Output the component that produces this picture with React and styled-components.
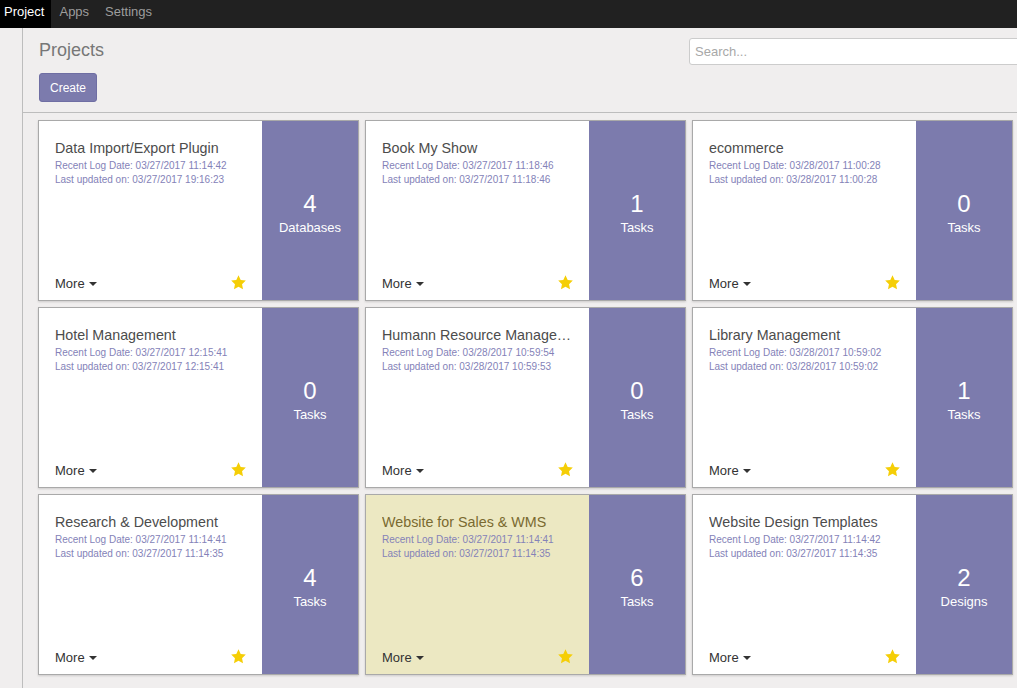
import React from 'react';
import styled, { createGlobalStyle } from 'styled-components';

const projects = [
    { name: 'Data Import/Export Plugin', log: '03/27/2017 11:14:42', updated: '03/27/2017 19:16:23', count: 4, label: 'Databases' },
    { name: 'Book My Show', log: '03/27/2017 11:18:46', updated: '03/27/2017 11:18:46', count: 1, label: 'Tasks' },
    { name: 'ecommerce', log: '03/28/2017 11:00:28', updated: '03/28/2017 11:00:28', count: 0, label: 'Tasks' },
    { name: 'Hotel Management', log: '03/27/2017 12:15:41', updated: '03/27/2017 12:15:41', count: 0, label: 'Tasks' },
    { name: 'Humann Resource Management', log: '03/28/2017 10:59:54', updated: '03/28/2017 10:59:53', count: 0, label: 'Tasks' },
    { name: 'Library Management', log: '03/28/2017 10:59:02', updated: '03/28/2017 10:59:02', count: 1, label: 'Tasks' },
    { name: 'Research & Development', log: '03/27/2017 11:14:41', updated: '03/27/2017 11:14:35', count: 4, label: 'Tasks' },
    { name: 'Website for Sales & WMS', log: '03/27/2017 11:14:41', updated: '03/27/2017 11:14:35', count: 6, label: 'Tasks', highlight: true },
    { name: 'Website Design Templates', log: '03/27/2017 11:14:42', updated: '03/27/2017 11:14:35', count: 2, label: 'Designs' },
];

const App = () => {
    return (
        <>
            <GlobalStyle />
            <TopBar>
                <NavItem active>Project</NavItem>
                <NavItem>Apps</NavItem>
                <NavItem>Settings</NavItem>
            </TopBar>
            <Body>
                <Sidebar />
                <Main>
                    <ControlPanel>
                        <div>
                            <Title>Projects</Title>
                            <CreateButton>Create</CreateButton>
                        </div>
                        <Search placeholder="Search..." />
                    </ControlPanel>
                    <Grid>
                        {projects.map((p) => (
                            <Card key={p.name} highlight={p.highlight}>
                                <Info>
                                    <Name highlight={p.highlight}>{p.name}</Name>
                                    <Meta>Recent Log Date: {p.log}</Meta>
                                    <Meta>Last updated on: {p.updated}</Meta>
                                    <Footer>
                                        <More>More <Caret /></More>
                                        <Star viewBox="0 0 24 24">
                                            <path d="M12 1.8l3.1 6.6 7.2.9-5.3 5 1.4 7.1L12 17.9l-6.4 3.5L7 14.3l-5.3-5 7.2-.9z" />
                                        </Star>
                                    </Footer>
                                </Info>
                                <Counter>
                                    <Count>{p.count}</Count>
                                    <CountLabel>{p.label}</CountLabel>
                                </Counter>
                            </Card>
                        ))}
                    </Grid>
                </Main>
            </Body>
        </>
    );
};
export default App;

const GlobalStyle = createGlobalStyle`
    html, body {
        margin:0;
        padding:0;
        background:#f0eeee;
        overflow:hidden;
        font-family:"Liberation Sans", Arial, sans-serif;
    }
`

const TopBar = styled.div`
    height:28px;
    background:#212121;
    display:flex;
    align-items:stretch;
`

const NavItem = styled.div`
    font-size:13px;
    line-height:16px;
    padding:${p => p.active ? '4px 7px 0 4px' : '4px 8px 0 8px'};
    background:${p => p.active ? '#000' : 'transparent'};
    color:${p => p.active ? '#fff' : '#9d9d9d'};
`

const Body = styled.div`
    display:flex;
    height:660px;
`

const Sidebar = styled.div`
    width:22px;
    flex-shrink:0;
    border-right:1px solid #bdbdbd;
`

const Main = styled.div`
    flex:1;
    min-width:0;
`

const ControlPanel = styled.div`
    display:flex;
    justify-content:space-between;
    align-items:flex-start;
    padding:10px 0 10px 16px;
    border-bottom:1px solid #bdbdbd;
`

const Title = styled.div`
    font-size:18px;
    line-height:22px;
    color:#777;
    margin-top:1px;
    margin-bottom:12px;
`

const CreateButton = styled.button`
    background:#7c7bad;
    color:#fff;
    border:1px solid #6f6ea3;
    border-radius:3px;
    font-family:inherit;
    font-size:12px;
    width:58px;
    height:29px;
    padding:0;
`

const Search = styled.input`
    width:340px;
    height:27px;
    box-sizing:border-box;
    margin:0 -12px 0 0;
    border:1px solid #ccc;
    border-radius:3px;
    padding:0 5px;
    font-family:inherit;
    font-size:13px;
    background:#fff;
    &::placeholder{
        color:#a8a8a8;
    }
`

const Grid = styled.div`
    display:grid;
    grid-template-columns:repeat(3, 321px);
    grid-auto-rows:181px;
    gap:6px;
    padding:7px 0 0 15px;
`

const Card = styled.div`
    display:flex;
    border:1px solid #a9a9a9;
    box-shadow:0 1px 2px rgba(0,0,0,0.15);
    background:${p => p.highlight ? '#ece8c2' : '#fff'};
    box-sizing:border-box;
`

const Info = styled.div`
    flex:1;
    min-width:0;
    display:flex;
    flex-direction:column;
    padding:17px 16px 9px 16px;
`

const Name = styled.div`
    font-size:14.3px;
    line-height:20px;
    color:${p => p.highlight ? '#7a6a30' : '#4c4c4c'};
    white-space:nowrap;
    overflow:hidden;
    text-overflow:ellipsis;
    margin-bottom:1px;
`

const Meta = styled.div`
    font-size:10px;
    line-height:14px;
    color:#8482b8;
`

const Footer = styled.div`
    margin-top:auto;
    display:flex;
    justify-content:space-between;
    align-items:center;
`

const More = styled.div`
    font-size:13px;
    color:#333;
    display:flex;
    align-items:center;
    gap:4px;
`

const Caret = styled.span`
    width:0;
    height:0;
    border-left:4px solid transparent;
    border-right:4px solid transparent;
    border-top:4px solid #333;
`

const Star = styled.svg`
    width:17px;
    height:17px;
    fill:#f5ce06;
    margin-right:-1px;
    margin-top:-2px;
`

const Counter = styled.div`
    width:96px;
    flex-shrink:0;
    background:#7c7bad;
    color:#fff;
    display:flex;
    flex-direction:column;
    align-items:center;
    justify-content:center;
    padding-top:5px;
    box-sizing:border-box;
`

const Count = styled.div`
    font-size:24px;
    line-height:28px;
`

const CountLabel = styled.div`
    font-size:13px;
    line-height:16px;
    margin-top:2px;
`
